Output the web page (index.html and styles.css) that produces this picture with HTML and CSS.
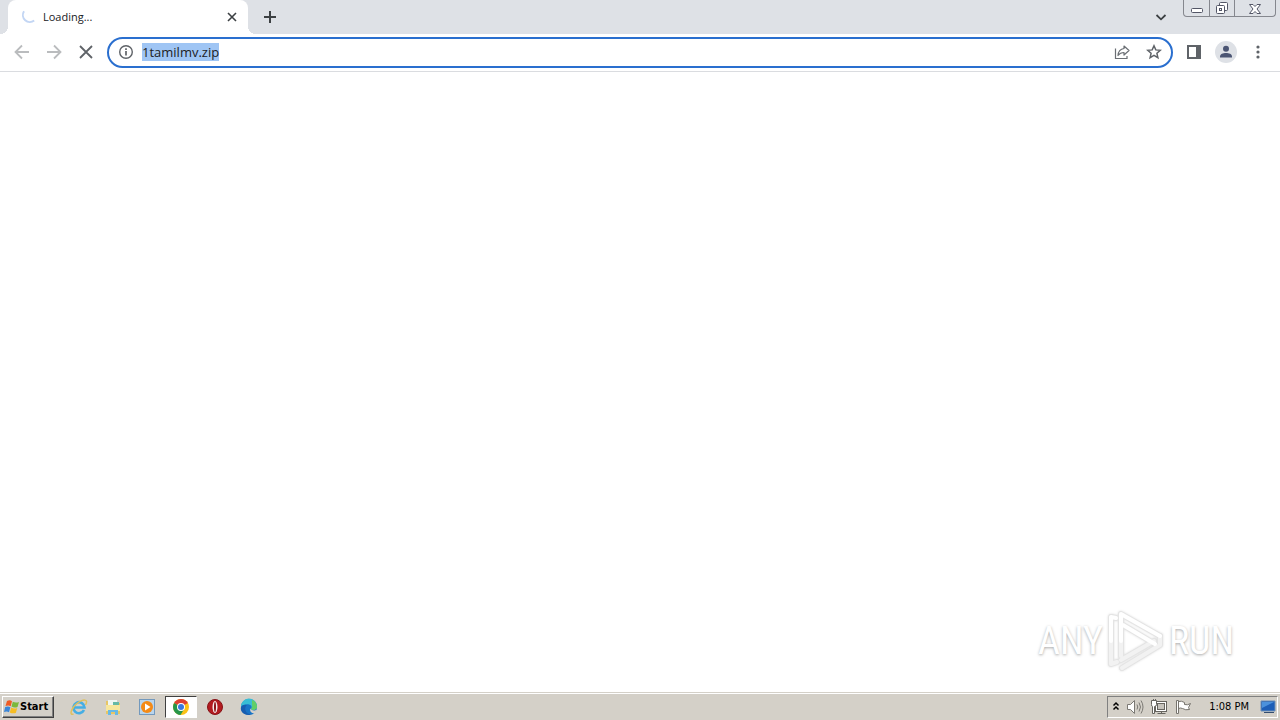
FILE: index.html
```html
<!DOCTYPE html>
<html lang="en">

<head>
    <meta charset="utf-8">
    <title>Loading...</title>
    <link rel="stylesheet" href="styles.css">
</head>

<body>
    <header class="tab-strip">
        <div class="tab">
            <svg class="spinner" width="16" height="16" viewBox="0 0 16 16">
                <path d="M4 2.200A7 7 0 0 0 14.200 11.500" fill="none" stroke="#c3d6f4" stroke-width="2" />
            </svg>
            <span class="tab-title">Loading...</span>
            <button class="icon-button tab-close" aria-label="Close tab">
                <svg width="16" height="16" viewBox="0 0 16 16">
                    <path d="M4 4l8 8M12 4l-8 8" stroke="#3c4043" stroke-width="1.600" />
                </svg>
            </button>
        </div>
        <button class="icon-button new-tab" aria-label="New tab">
            <svg width="16" height="16" viewBox="0 0 16 16">
                <path d="M8 2v12M2 8h12" stroke="#3c4043" stroke-width="2" />
            </svg>
        </button>
        <button class="icon-button tab-search" aria-label="Search tabs">
            <svg width="16" height="16" viewBox="0 0 16 16">
                <path d="M3.500 6L8 10.300L12.500 6" fill="none" stroke="#3c4043" stroke-width="1.800" />
            </svg>
        </button>
        <div class="window-buttons">
            <button class="window-button" aria-label="Minimize">
                <svg width="14" height="14" viewBox="0 0 14 14">
                    <rect x="1.500" y="7.500" width="11" height="4" rx="1" fill="#fff" stroke="#535666" />
                </svg>
            </button>
            <button class="window-button" aria-label="Restore">
                <svg width="14" height="14" viewBox="0 0 14 14" fill="#fff" stroke="#535666">
                    <rect x="4.500" y="1.500" width="8" height="8" rx="1" />
                    <rect x="1.500" y="4.500" width="8" height="8" rx="1" />
                    <rect x="4.500" y="7.500" width="2" height="2" />
                </svg>
            </button>
            <button class="window-button window-close" aria-label="Close">
                <svg width="14" height="14" viewBox="0 0 14 14">
                    <path d="M1.500 3.500h3.500l2 2l2-2h3.500l-3.500 4.500l3.500 4.500h-3.500l-2-2l-2 2h-3.500l3.500-4.500z" fill="#fff" stroke="#535666" />
                </svg>
            </button>
        </div>
    </header>

    <nav class="toolbar">
        <button class="icon-button" aria-label="Back">
            <svg width="16" height="16" viewBox="0 0 16 16">
                <path d="M15 8H2M8 1.500L1.500 8L8 14.500" fill="none" stroke="#babcbe" stroke-width="1.800" />
            </svg>
        </button>
        <button class="icon-button" aria-label="Forward">
            <svg width="16" height="16" viewBox="0 0 16 16">
                <path d="M1 8h13M8 1.500L14.500 8L8 14.500" fill="none" stroke="#babcbe" stroke-width="1.800" />
            </svg>
        </button>
        <button class="icon-button" aria-label="Stop">
            <svg width="16" height="16" viewBox="0 0 16 16">
                <path d="M2 2l12 12M14 2L2 14" stroke="#5f6368" stroke-width="1.800" />
            </svg>
        </button>
        <div class="address-bar">
            <button class="icon-button" aria-label="Site information">
                <svg width="16" height="16" viewBox="0 0 16 16">
                    <circle cx="8" cy="8" r="6.300" fill="none" stroke="#5f6368" stroke-width="1.400" />
                    <path d="M8 7v4.500M8 4.300v1.700" stroke="#5f6368" stroke-width="1.700" />
                </svg>
            </button>
            <input class="address-input" id="address" type="text" value="1tamilmv.zip" aria-label="Address" spellcheck="false">
            <button class="icon-button" aria-label="Share">
                <svg width="16" height="16" viewBox="0 0 16 16" fill="none" stroke="#6b6f74" stroke-width="1.200">
                    <path d="M1.500 4.500v10h11.500V12" />
                    <path d="M10 2L15 6.500L10 11V8.500C7.500 8.500 5.500 9.500 4 11.500C4.300 7.500 6 5 10 4.500z" stroke-linejoin="round" />
                </svg>
            </button>
            <button class="icon-button" aria-label="Bookmark this tab">
                <svg width="16" height="16" viewBox="0 0 16 16">
                    <path d="M8 1.800l1.800 4.100l4.500.4l-3.400 3l1 4.400L8 11.400l-3.900 2.300l1-4.400l-3.400-3l4.500-.4z" fill="none" stroke="#5f6368" stroke-width="1.500" />
                </svg>
            </button>
        </div>
        <button class="icon-button" aria-label="Side panel">
            <svg width="16" height="16" viewBox="0 0 16 16">
                <path d="M1 1h14v14H1zM3 3v10h7V3z" fill="#5f6368" fill-rule="evenodd" />
            </svg>
        </button>
        <button class="icon-button avatar" aria-label="Profile">
            <svg width="22" height="22" viewBox="0 0 22 22">
                <circle cx="11" cy="11" r="11" fill="#dee1e6" />
                <circle cx="11" cy="7.800" r="3" fill="#4b5573" />
                <path d="M5 16.500v-1c0-2.400 3-3.500 6-3.500s6 1.100 6 3.500v1z" fill="#4b5573" />
            </svg>
        </button>
        <button class="icon-button" aria-label="Menu">
            <svg width="16" height="16" viewBox="0 0 16 16" fill="#5f6368">
                <circle cx="8" cy="3" r="1.600" />
                <circle cx="8" cy="8" r="1.600" />
                <circle cx="8" cy="13" r="1.600" />
            </svg>
        </button>
    </nav>

    <main class="page">
        <div class="watermark">
            <span>ANY</span>
            <svg class="watermark-logo" width="58" height="62" viewBox="0 0 58 62" fill="none" stroke-linejoin="round" stroke-linecap="round">
                <g stroke="#e4e4e4" stroke-width="6">
                    <path d="M9 8L4 7v47l6-2" />
                    <path d="M14 46V4l39 22M16 15l32 19" />
                    <path d="M15 58l38-23v-9M14 50l33-19" />
                </g>
                <g stroke="#f2f2f2" stroke-width="4">
                    <path d="M4 32v22l6-2M14 50l33-19M15 58l38-23v-9M14 46V30" />
                    <path d="M9 8L4 7v24M14 31V4l39 22M16 15l32 19" stroke="#fff" />
                </g>
            </svg>
            <span>RUN</span>
        </div>
    </main>

    <footer class="taskbar">
        <button class="start-button">
            <svg width="16" height="16" viewBox="0 0 16 16">
                <path d="M3 2q3-1.500 5 .2L6.700 7.300Q4.500 5.800 1.500 7z" fill="#ef5b24" />
                <path d="M8.800 2.700q3 1.500 6.200.2l-1.500 5q-3 1.200-6-.4z" fill="#7bb83b" />
                <path d="M1.200 8q3-1.300 5.200.3L5 13.300Q3 12 0 13z" fill="#3b86d8" />
                <path d="M7.200 8.500q3 1.600 6.100.4l-1.500 5q-3 1.100-6-.4z" fill="#f6bd24" />
            </svg>
            Start
        </button>
        <div class="quick-launch">
            <button class="task-button" aria-label="Internet Explorer">
                <svg width="18" height="18" viewBox="0 0 18 18" fill="none">
                    <path d="M14 12A5.500 5.500 0 1 1 14.500 9.500H4.500" stroke="#45aee4" stroke-width="2.600" />
                    <path d="M3.500 16C-1 18 1 10 7 5.500s12-5 8.500 1.500" stroke="#dfc05e" stroke-width="1.500" />
                </svg>
            </button>
            <button class="task-button" aria-label="Windows Explorer">
                <svg width="18" height="18" viewBox="0 0 18 18">
                    <path d="M2 3h5l1 2h8v11H2z" fill="#e7c665" />
                    <path d="M4 2h9v6H4z" fill="#eff6f2" />
                    <path d="M9 4h6v4H9z" fill="#65b9a5" />
                    <path d="M2 7h14v6H2z" fill="#f7e69c" />
                    <path d="M4 17v-5h10v5h-3v-3H7v3z" fill="#67b9e6" />
                </svg>
            </button>
            <button class="task-button" aria-label="Media Player">
                <svg width="18" height="18" viewBox="0 0 18 18">
                    <rect x="1.500" y="1.500" width="15" height="15" fill="#b9d5ed" stroke="#7399bd" />
                    <circle cx="9" cy="9" r="6" fill="#f48a16" />
                    <path d="M7 5.500v7l5.500-3.500z" fill="#fff" />
                </svg>
            </button>
            <button class="task-button active" aria-label="Chrome">
                <svg width="18" height="18" viewBox="0 0 18 18">
                    <circle cx="9" cy="9" r="8" fill="#fbc116" />
                    <path d="M9 9L2.100 5A8 8 0 0 1 15.900 5z" fill="#dd4033" />
                    <path d="M9 9L2.100 5A8 8 0 0 0 8.500 17L12.500 10.500z" fill="#27964a" />
                    <circle cx="9" cy="9" r="4" fill="#fff" />
                    <circle cx="9" cy="9" r="3" fill="#3978df" />
                </svg>
            </button>
            <button class="task-button" aria-label="Opera">
                <svg width="18" height="18" viewBox="0 0 18 18">
                    <circle cx="9" cy="9" r="7.500" fill="#b31b20" stroke="#861216" />
                    <ellipse cx="9" cy="9" rx="2.500" ry="6" fill="#f7eeee" />
                    <ellipse cx="9" cy="9" rx="1" ry="5" fill="#8b1519" />
                </svg>
            </button>
            <button class="task-button" aria-label="Edge">
                <svg width="18" height="18" viewBox="0 0 18 18">
                    <circle cx="9" cy="9" r="8" fill="#1874c7" />
                    <path d="M1 9A8 8 0 0 1 17 8c.5 4-4 5-6 3c1-1 1-4-2-4.500C6 6 2 7 1 9z" fill="#38bdd5" />
                    <path d="M12 2q4 1 5 6c.5 4-4 5-6 3q2-2 1-4z" fill="#61ce67" />
                    <path d="M10.500 10.500c1 2 3 2.500 6.500 1.500l-2 3c-3 1-6-1.500-4.500-4.500z" fill="#d4d0c8" />
                    <path d="M6 8c-2 3 0 8 5 8.500l-2 .5C3 17 0 13 1 9q2-3 6-2z" fill="#175db0" />
                </svg>
            </button>
        </div>
        <div class="tray">
            <button class="icon-button chevrons" aria-label="Show hidden icons">
                <svg width="8" height="12" viewBox="0 0 8 12">
                    <path d="M1.500 4.500L4 2l2.500 2.500M1.500 8.500L4 6l2.500 2.500" fill="none" stroke="#000" stroke-width="1.500" />
                </svg>
            </button>
            <button class="icon-button" aria-label="Volume">
                <svg width="18" height="18" viewBox="0 0 18 18" fill="none" stroke="#7b7974">
                    <path d="M1.500 6.500h3l4-4v13l-4-4h-3z" fill="#fff" />
                    <path d="M11 6.500q1.500 2.500 0 5M13 4.500q3 4.500 0 9M15 2.500q4 6.500 0 13" />
                </svg>
            </button>
            <button class="icon-button" aria-label="Network">
                <svg width="18" height="18" viewBox="0 0 18 18" fill="#fff" stroke="#66645f">
                    <rect x="5.500" y="3.500" width="11" height="10" />
                    <rect x="7.500" y="5.500" width="7" height="6" fill="#c6c3bc" />
                    <path d="M7.500 15.500h8M11.500 13.500v2" />
                    <path d="M1.500 2.500h5v4q0 2-2 2v7h-2v-7q-1 0-1-2zM3.500 1v2M5.500 1v2" />
                </svg>
            </button>
            <button class="icon-button" aria-label="Action Center">
                <svg width="18" height="18" viewBox="0 0 18 18" fill="#fff" stroke="#77746e">
                    <path d="M4.500 3.500q3-1 6 1v2q3 1 6-1l-2 4l1 2q-4 1-7-1q-2-1-4 0z" />
                    <path d="M2.500 2.500h2v13h-2z" />
                </svg>
            </button>
            <time class="clock">1:08 PM</time>
            <button class="icon-button" aria-label="Show desktop">
                <svg width="18" height="18" viewBox="0 0 18 18">
                    <path d="M2 3h14v10H2z" fill="#1d5eb7" stroke="#6e8fb6" />
                    <path d="M3 4h12L3 10z" fill="#4b91dc" />
                    <path d="M5 14h10v1H5z" fill="#334d70" />
                </svg>
            </button>
        </div>
    </footer>

    <script>
        // Select the whole address, as after opening a new tab
        const address = document.getElementById('address');
        address.focus();
        address.select();
    </script>
</body>

</html>
```
FILE: styles.css
```css
* {
    box-sizing: border-box;
}

body {
    margin: 0;
    min-height: 100vh;
    display: flex;
    flex-direction: column;
    background-color: #fff;
    font-family: "DejaVu Sans Condensed", "DejaVu Sans", sans-serif;
    font-size: 11px;
    color: #202124;
}

button {
    font: inherit;
    color: inherit;
    padding: 0;
    border: none;
    background: none;
}

svg {
    display: block;
    flex: none;
}

.icon-button {
    display: flex;
    align-items: center;
    justify-content: center;
    flex: none;
}

/* Tabs */
.tab-strip {
    display: flex;
    align-items: center;
    height: 34px;
    padding: 0 4px 0 0;
    background-color: #dee1e6;
}

/* The side strips round the tab's lower corners outwards */
.tab-strip::before,
.tab::after {
    content: "";
    width: 8px;
    height: 8px;
    align-self: flex-end;
    flex: none;
}

.tab-strip::before {
    background: radial-gradient(circle at 0 0, #dee1e6 8px, #fff 8px);
}

.tab {
    display: flex;
    align-items: center;
    width: 240px;
    height: 34px;
    padding: 0 0 0 12px;
    border-radius: 8px 8px 0 0;
    background-color: #fff;
}

.tab-strip .new-tab::before {
    content: "";
    width: 8px;
    height: 8px;
    margin-right: 6px;
    align-self: flex-end;
    background: radial-gradient(circle at 100% 0, #dee1e6 8px, #fff 8px);
}

.tab-title {
    flex: 1;
    padding-left: 7px;
    font-family: "Open Sans", sans-serif;
    line-height: 14px;
    padding-bottom: 1px;
}

.new-tab {
    height: 34px;
}

.tab-search {
    margin-left: auto;
    margin-right: 14px;
}

.window-buttons {
    display: flex;
    align-self: flex-start;
    height: 17px;
    border: 1px solid #85878e;
    border-top: none;
    border-radius: 0 0 4px 4px;
}

.window-button {
    display: flex;
    justify-content: center;
    align-items: center;
    width: 25px;
}

.window-button + .window-button {
    border-left: 1px solid #85878e;
}

.window-button.window-close {
    width: 41px;
}

/* Toolbar */
.toolbar {
    display: flex;
    align-items: center;
    gap: 16px;
    height: 38px;
    padding: 0 14px 1px;
    border-bottom: 1px solid #dadce0;
}

.address-bar {
    display: flex;
    align-items: center;
    flex: 1;
    gap: 16px;
    height: 31px;
    margin: 0 -3px;
    padding: 0 9px;
    border: 2px solid #2a6fcf;
    border-radius: 16px;
}

.address-input {
    flex: 1;
    min-width: 0;
    height: 20px;
    margin-left: -8px;
    padding: 0;
    border: none;
    outline: none;
    background: none;
    font-family: "Open Sans", sans-serif;
    font-size: 13px;
    color: #202124;
}

.address-input::selection {
    background-color: #9fc5f4;
    color: #202124;
}

.avatar {
    margin: 0 -3px;
}

/* Page */
.page {
    flex: 1;
    display: flex;
    align-items: flex-end;
    justify-content: flex-end;
    padding: 20px 46px;
}

.watermark {
    display: flex;
    align-items: center;
    gap: 4px;
    font-family: "Liberation Sans Narrow", "Roboto Condensed", sans-serif;
    font-size: 38px;
    color: #fff;
    text-shadow: 0 1px 3px #a8a8a8;
}

.watermark-logo {
    filter: drop-shadow(0 0 1px #ddd);
}

/* Taskbar */
.taskbar {
    display: flex;
    align-items: center;
    height: 28px;
    padding: 0 2px;
    border-top: 1px solid #d4d0c8;
    box-shadow: inset 0 1px #fff;
    background-color: #d4d0c8;
    color: #000;
}

.start-button {
    display: flex;
    align-items: center;
    height: 22px;
    width: 52px;
    padding-left: 1px;
    border: 1px solid;
    border-color: #fff #404040 #404040 #fff;
    box-shadow: inset -1px -1px #808080;
    font-weight: bold;
}

.quick-launch {
    display: flex;
    gap: 2px;
    margin-left: 9px;
}

.task-button {
    display: flex;
    align-items: center;
    justify-content: center;
    width: 32px;
    height: 22px;
}

.task-button.active {
    border: 1px solid;
    border-color: #404040 #fff #fff #404040;
    background-color: #fff;
}

.tray {
    display: flex;
    align-items: center;
    gap: 6px;
    height: 22px;
    margin-left: auto;
    padding: 0 0 0 4px;
    border: 1px solid;
    border-color: #808080 #fff #fff #808080;
}

.clock {
    padding: 0 4px 0 11px;
}
```
